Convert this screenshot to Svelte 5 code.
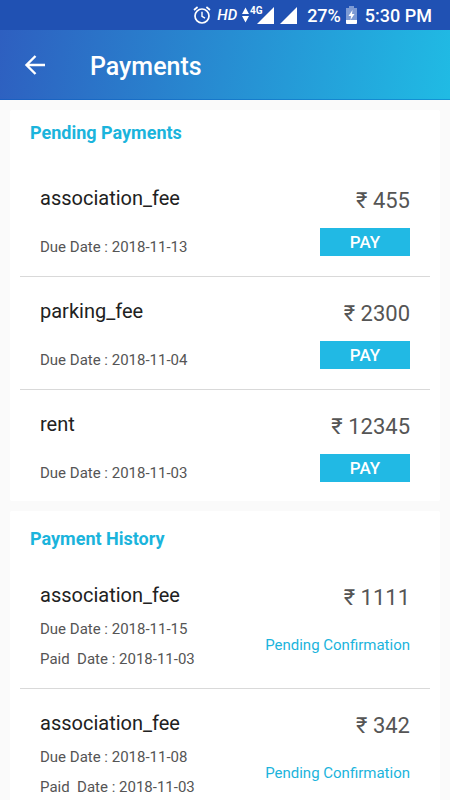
<script>
  const pending = [
    { name: "association_fee", due: "2018-11-13", amount: 455 },
    { name: "parking_fee", due: "2018-11-04", amount: 2300 },
    { name: "rent", due: "2018-11-03", amount: 12345 },
  ]
  const history = [
    { name: "association_fee", due: "2018-11-15", paid: "2018-11-03", amount: 1111 },
    { name: "association_fee", due: "2018-11-08", paid: "2018-11-03", amount: 342 },
  ]
</script>

<div class="app">
  <div class="status">
    <svg class="alarm" width="18" height="20" viewBox="0 0 18 20" fill="none" stroke="#fff">
      <circle cx="9" cy="11" r="7" stroke-width="1.7" />
      <path d="M9 6.8V11.4L12 13.2" stroke-width="1.4" />
      <path d="M1 5L4.6 2M17 5L13.4 2" stroke-width="1.7" />
    </svg>
    <span class="hd">HD</span>
    <svg class="signal" width="32" height="20" viewBox="0 0 32 20" fill="#fff">
      <path d="M0 9L3.5 2.5L7 9ZM0 11H7L3.5 17.5Z" />
      <path d="M15 19L32 2V19Z" />
      <text x="8" y="9" font-size="10" font-weight="700" stroke="#2051b3" stroke-width="2" paint-order="stroke">4G</text>
    </svg>
    <svg class="signal2" width="17" height="20" viewBox="0 0 17 20" fill="#fff">
      <path d="M0 19L17 2V19Z" />
    </svg>
    <span class="percent">27%</span>
    <svg class="battery" width="11" height="20" viewBox="0 0 11 20">
      <path d="M3 1H8V3H11V15H0V3H3Z" fill="#7d9ad4" />
      <path d="M0 15H11V18Q11 19 10 19H1Q0 19 0 18Z" fill="#fff" />
      <path d="M6.5 5L2.5 11H5L4.5 15L8.5 9H6Z" fill="#fff" />
    </svg>
    <span>5:30 PM</span>
  </div>

  <header>
    <button class="back" aria-label="Back">
      <svg width="22" height="20" viewBox="0 0 22 20" fill="none" stroke="#fff" stroke-width="2.4">
        <path d="M21 10H2.5M11.5 1L2.5 10L11.5 19" />
      </svg>
    </button>
    <h1>Payments</h1>
  </header>

  <main>
    <section class="pending">
      <h2>Pending Payments</h2>
      <ul>
        {#each pending as item}
          <li>
            <div class="info">
              <h3>{item.name}</h3>
              <p>Due Date : {item.due}</p>
            </div>
            <div class="side">
              <span class="amount">₹ {item.amount}</span>
              <button class="pay">PAY</button>
            </div>
          </li>
        {/each}
      </ul>
    </section>

    <section class="history">
      <h2>Payment History</h2>
      <ul>
        {#each history as item}
          <li>
            <div class="info">
              <h3>{item.name}</h3>
              <p>Due Date : {item.due}</p>
              <p>Paid&nbsp; Date : {item.paid}</p>
            </div>
            <div class="side">
              <span class="amount">₹ {item.amount}</span>
              <span class="state">Pending Confirmation</span>
            </div>
          </li>
        {/each}
      </ul>
    </section>
  </main>
</div>

<style>
  :global(body) {
    margin: 0;
  }
  .app {
    display: flex;
    flex-direction: column;
    height: 100vh;
    overflow: hidden;
    background: #fafafa;
    font-family: Roboto, sans-serif;
    color: #212121;
  }
  .status {
    display: flex;
    flex: none;
    align-items: center;
    justify-content: flex-end;
    height: 30px;
    padding-right: 18px;
    background: #2051b3;
    color: #fff;
    font-size: 18px;
    font-weight: 500;
  }
  .hd {
    margin: 0 5px 0 6px;
    font-size: 15px;
    font-style: italic;
    font-weight: 500;
  }
  .signal2 {
    margin-left: 6px;
  }
  .percent {
    margin-left: 10px;
  }
  .battery {
    margin: 0 8px 0 5px;
  }
  header {
    display: flex;
    flex: none;
    align-items: center;
    height: 70px;
    padding: 0 24px;
    box-sizing: border-box;
    background: linear-gradient(100deg, #2e5fc0, #20bbe4) border-box;
    border-bottom: 1px solid rgba(0, 90, 190, 0.4);
    color: #fff;
  }
  .back {
    display: flex;
    margin-right: 44px;
    padding: 0;
    border: none;
    background: none;
    cursor: pointer;
  }
  h1 {
    margin: 0;
    padding-top: 4px;
    font-size: 25px;
    font-weight: 500;
    line-height: 32px;
  }
  main {
    display: flex;
    flex: 1;
    flex-direction: column;
    gap: 10px;
    min-height: 0;
    padding: 10px;
    overflow-y: auto;
    scrollbar-width: none;
  }
  section {
    flex: none;
    padding: 0 10px;
    background: #fff;
    border-radius: 2px;
  }
  h2 {
    margin: 0;
    padding: 0 10px;
    color: #1bb4dc;
    font-size: 18px;
    font-weight: 700;
    line-height: 24px;
  }
  .pending h2 {
    padding-top: 11px;
    padding-bottom: 19px;
  }
  .history h2 {
    padding-top: 16px;
    padding-bottom: 10px;
  }
  ul {
    margin: 0;
    padding: 0;
    list-style: none;
  }
  li {
    display: flex;
    justify-content: space-between;
    padding: 20px 20px 19px;
  }
  li + li {
    border-top: 1px solid #d9d9d9;
  }
  .pending li:last-child {
    padding-bottom: 18px;
  }
  .info,
  .side {
    display: flex;
    flex-direction: column;
  }
  .side {
    align-items: flex-end;
  }
  h3 {
    margin: 0;
    font-size: 20px;
    font-weight: 400;
    line-height: 28px;
  }
  p {
    margin: 10px 0 0;
    color: #555;
    font-size: 15px;
    line-height: 20px;
  }
  .pending p {
    margin-top: 25px;
  }
  .amount {
    color: #555;
    font-size: 22px;
    line-height: 34px;
  }
  .pay {
    width: 90px;
    height: 28px;
    margin-top: 10px;
    padding: 0;
    border: none;
    background: #21b9e4;
    color: #fff;
    font-family: inherit;
    font-size: 17px;
    font-weight: 500;
    cursor: pointer;
  }
  .state {
    margin-top: 20px;
    color: #1bb4dc;
    font-size: 15px;
    line-height: 20px;
  }
</style>
